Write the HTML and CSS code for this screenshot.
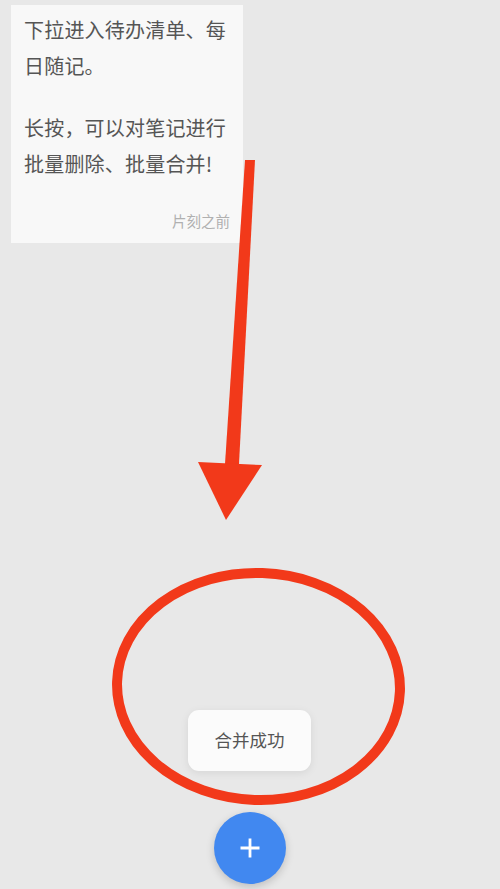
FILE: index.html
```html
<!DOCTYPE html>
<html lang="zh-CN">
<head>
<meta charset="utf-8">
<title>笔记</title>
<link rel="stylesheet" href="styles.css">
</head>
<body>
<main class="screen">
  <section class="notes">
    <article class="note-card">
      <p class="note-text">下拉进入待办清单、每<br>日随记。</p>
      <p class="note-text">长按，可以对笔记进行<br>批量删除、批量合并!</p>
      <div class="note-time">片刻之前</div>
    </article>
  </section>

  <svg class="annotation" width="500" height="889" viewBox="0 0 500 889" aria-hidden="true">
    <polygon class="mark" points="245,160 255,160 239,464 225,464"/>
    <polygon class="mark" points="198,462 262,465 226,520"/>
    <ellipse class="ring" cx="258.5" cy="686.5" rx="141.5" ry="113.5" transform="rotate(2 258.5 686.5)"/>
  </svg>

  <div class="toast">合并成功</div>

  <button class="fab" type="button" aria-label="新建">
    <svg width="20" height="20" viewBox="0 0 20 20"><path d="M10 0.5v19M0.5 10h19" stroke="#fff" stroke-width="2.8" fill="none"/></svg>
  </button>
</main>
</body>
</html>
```

FILE: styles.css
```css
html, body {
  margin: 0;
  padding: 0;
  background: #e8e8e8;
}
body {
  font-family: "Noto Sans CJK SC", "Noto Sans", sans-serif;
  overflow: hidden;
}
.screen {
  position: relative;
  width: 500px;
  height: 889px;
  overflow: hidden;
  background: #e8e8e8;
}
.notes {
  padding: 5px 0 0 11px;
}
.note-card {
  width: 232px;
  box-sizing: border-box;
  background: #f8f8f8;
  padding: 7px 13px 12px 13px;
  display: flex;
  flex-direction: column;
}
.note-text {
  margin: 0;
  font-size: 20px;
  line-height: 35.5px;
  color: #555;
  letter-spacing: 0.2px;
  white-space: nowrap;
}
.note-text + .note-text {
  margin-top: 27px;
}
.note-time {
  margin-top: 30px;
  align-self: flex-end;
  font-size: 14.5px;
  line-height: 20px;
  color: #b0b0b0;
}
.annotation {
  position: absolute;
  left: 0;
  top: 0;
  pointer-events: none;
}
.mark {
  fill: #f2391a;
}
.ring {
  fill: none;
  stroke: #f2391a;
  stroke-width: 10;
}
.toast {
  position: absolute;
  left: 188px;
  top: 710px;
  width: 123px;
  height: 61px;
  box-sizing: border-box;
  padding-bottom: 3px;
  background: #fbfbfb;
  border-radius: 11px;
  box-shadow: 0 2px 8px rgba(0,0,0,0.08);
  display: flex;
  align-items: center;
  justify-content: center;
  font-size: 17.5px;
  color: #555;
}
.fab {
  position: absolute;
  left: 214px;
  top: 812px;
  width: 72px;
  height: 72px;
  border: none;
  border-radius: 50%;
  background: #4188f0;
  box-shadow: 0 3px 8px rgba(0,0,0,0.18);
  display: flex;
  align-items: center;
  justify-content: center;
  padding: 0;
}
```
